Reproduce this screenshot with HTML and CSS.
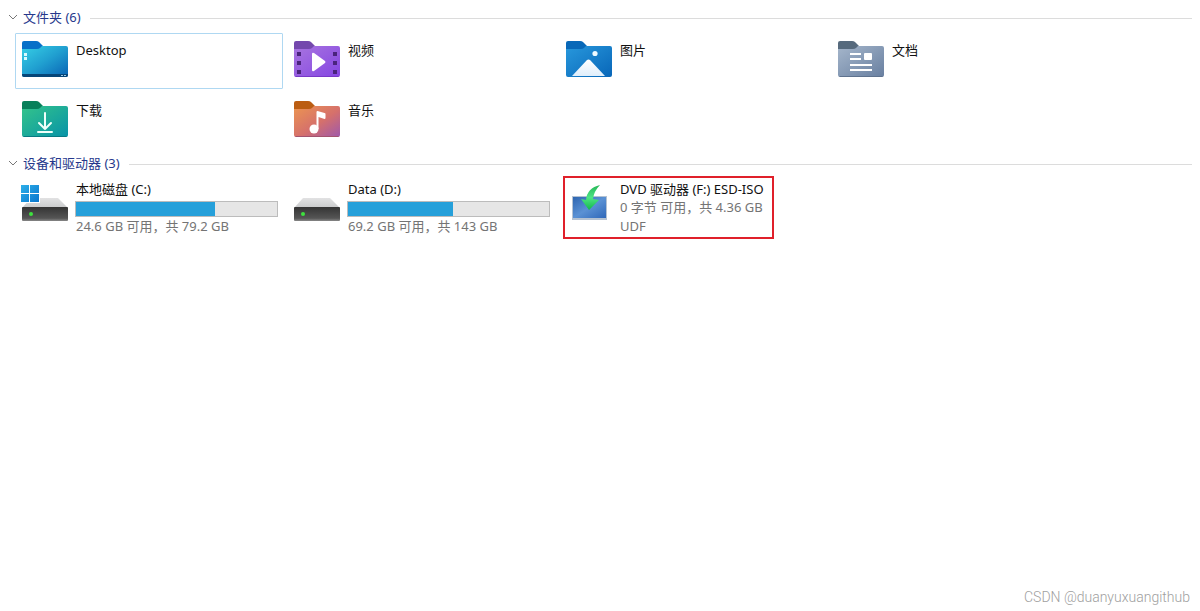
FILE: index.html
```html
<!DOCTYPE html>
<html lang="zh-CN">
<head>
    <meta charset="UTF-8">
    <meta name="viewport" content="width=device-width, initial-scale=1.0">
    <title>此电脑</title>
    <link rel="stylesheet" href="styles.css">
</head>
<body>

<main class="explorer">
    <!-- 文件夹 -->
    <section class="group">
        <h2 class="group-header">
            <button class="group-toggle" type="button">
                <svg class="chevron" viewBox="0 0 10 6"><path d="M1 1l4 4 4-4"/></svg>
                文件夹 (6)
            </button>
        </h2>
        <div class="items">
            <a class="item selected" href="#">
                <svg class="icon" viewBox="0 0 46 36">
                    <defs>
                        <linearGradient id="desktop" x1="0" y1="0" x2="1" y2="1"><stop offset="0" stop-color="#37d0e6"/><stop offset=".5" stop-color="#209fd0"/><stop offset="1" stop-color="#0862b4"/></linearGradient>
                    </defs>
                    <path fill="#0870c8" d="M0 2q0-2 2-2h12q2 0 3 1l4 4-3 5H0z"/>
                    <path fill="url(#desktop)" d="M0 8h15q2 0 3-1l2-2h24q2 0 2 2v27q0 2-2 2H2q-2 0-2-2z"/>
                    <path fill="#064678" d="M0 33h46v1q0 2-2 2H2q-2 0-2-2z"/>
                    <path fill="#d9fbff" d="M2 12h3v3H2zM2 16h3v3H2z"/>
                    <path fill="#9fcbe5" d="M39 34h2v1h-2zM42 34h2v1h-2z"/>
                </svg>
                <span class="name">Desktop</span>
            </a>
            <a class="item" href="#">
                <svg class="icon" viewBox="0 0 46 36">
                    <defs>
                        <linearGradient id="video" x1="0" y1="0" x2="1" y2="1"><stop offset="0" stop-color="#a875df"/><stop offset="1" stop-color="#8546e2"/></linearGradient>
                    </defs>
                    <path fill="#7448ad" d="M0 2q0-2 2-2h12q2 0 3 1l4 4-3 5H0z"/>
                    <path fill="url(#video)" d="M0 8h15q2 0 3-1l2-2h24q2 0 2 2v27q0 2-2 2H2q-2 0-2-2z"/>
                    <path fill="#7838c7" d="M1 35h44l-1 1H2z"/>
                    <path fill="#4a247d" d="M3 11h4v4H3zM3 20h4v4H3zM3 29h4v4H3zM39 11h4v4h-4zM39 20h4v4h-4zM39 29h4v4h-4z"/>
                    <path fill="#fff" d="M18 13q0-2 2-1l11 8q1 1 0 2l-11 8q-2 1-2-1z"/>
                </svg>
                <span class="name">视频</span>
            </a>
            <a class="item" href="#">
                <svg class="icon" viewBox="0 0 46 36">
                    <defs>
                        <linearGradient id="picture" x1="0" y1="0" x2="1" y2="1"><stop offset="0" stop-color="#2898dc"/><stop offset="1" stop-color="#0866b8"/></linearGradient>
                        <linearGradient id="hill" x1="0" y1="0" x2="0" y2="1"><stop offset="0" stop-color="#fff"/><stop offset="1" stop-color="#dfeefb"/></linearGradient>
                    </defs>
                    <path fill="#0868b8" d="M0 2q0-2 2-2h12q2 0 3 1l4 4-3 5H0z"/>
                    <path fill="url(#picture)" d="M0 8h15q2 0 3-1l2-2h24q2 0 2 2v27q0 2-2 2H2q-2 0-2-2z"/>
                    <circle cx="29" cy="12.500" r="2.600" fill="#effaff"/>
                    <path fill="url(#hill)" d="M6 35l14.500-15.500q2-2 4 0L39 35z"/>
                </svg>
                <span class="name">图片</span>
            </a>
            <a class="item" href="#">
                <svg class="icon" viewBox="0 0 46 36">
                    <defs>
                        <linearGradient id="document" x1="0" y1="0" x2="1" y2="1"><stop offset="0" stop-color="#a5b6cb"/><stop offset="1" stop-color="#687fa0"/></linearGradient>
                    </defs>
                    <path fill="#566a7d" d="M0 2q0-2 2-2h12q2 0 3 1l4 4-3 5H0z"/>
                    <path fill="url(#document)" d="M0 8h15q2 0 3-1l2-2h24q2 0 2 2v27q0 2-2 2H2q-2 0-2-2z"/>
                    <path fill="#5e728e" d="M1 35h44l-1 1H2z"/>
                    <path fill="#fff" d="M12 12h11v2H12zM12 17h11v2H12zM12 23h22v2H12zM12 28h22v2H12z"/>
                    <rect x="26" y="12" width="8" height="7" rx="1" fill="#fff"/>
                </svg>
                <span class="name">文档</span>
            </a>
            <a class="item" href="#">
                <svg class="icon" viewBox="0 0 46 36">
                    <defs>
                        <linearGradient id="download" x1="0" y1="0" x2="1" y2="1"><stop offset="0" stop-color="#34c48a"/><stop offset="1" stop-color="#0793a8"/></linearGradient>
                    </defs>
                    <path fill="#08805a" d="M0 2q0-2 2-2h12q2 0 3 1l4 4-3 5H0z"/>
                    <path fill="url(#download)" d="M0 8h15q2 0 3-1l2-2h24q2 0 2 2v27q0 2-2 2H2q-2 0-2-2z"/>
                    <path fill="#087a83" d="M1 35h44l-1 1H2z"/>
                    <path fill="none" stroke="#effffa" stroke-width="2" stroke-linecap="round" stroke-linejoin="round" d="M23 12v16M17 22l6 6 6-6M16 31h14"/>
                </svg>
                <span class="name">下载</span>
            </a>
            <a class="item" href="#">
                <svg class="icon" viewBox="0 0 46 36">
                    <defs>
                        <linearGradient id="music" x1="0" y1="0" x2="1" y2="1"><stop offset="0" stop-color="#ec9550"/><stop offset=".55" stop-color="#d5706c"/><stop offset="1" stop-color="#9e58ac"/></linearGradient>
                    </defs>
                    <path fill="#bb5d12" d="M0 2q0-2 2-2h12q2 0 3 1l4 4-3 5H0z"/>
                    <path fill="url(#music)" d="M0 8h15q2 0 3-1l2-2h24q2 0 2 2v27q0 2-2 2H2q-2 0-2-2z"/>
                    <path fill="#a2536f" d="M1 35h44l-1 1H2z"/>
                    <circle cx="20" cy="28" r="4.500" fill="#fff"/>
                    <path fill="#fff" d="M22.500 28V11q0-1 1-1l7 2q1 0 1 1v4q0 1-1 1l-6-2v12z"/>
                </svg>
                <span class="name">音乐</span>
            </a>
        </div>
    </section>

    <!-- 设备和驱动器 -->
    <section class="group">
        <h2 class="group-header">
            <button class="group-toggle" type="button">
                <svg class="chevron" viewBox="0 0 10 6"><path d="M1 1l4 4 4-4"/></svg>
                设备和驱动器 (3)
            </button>
        </h2>
        <div class="items">
            <a class="item drive" href="#">
                <svg class="icon" viewBox="0 0 46 40">
                    <defs>
                        <linearGradient id="drive-top" x1="0" y1="0" x2="0" y2="1"><stop offset="0" stop-color="#e2e2e3"/><stop offset="1" stop-color="#c9cacb"/></linearGradient>
                        <linearGradient id="drive-front" x1="0" y1="0" x2="0" y2="1"><stop offset="0" stop-color="#343434"/><stop offset=".8" stop-color="#555"/><stop offset="1" stop-color="#888"/></linearGradient>
                        <linearGradient id="windows" x1="0" y1="0" x2="1" y2="1"><stop offset="0" stop-color="#2dafe9"/><stop offset="1" stop-color="#0875cd"/></linearGradient>
                    </defs>
                    <path fill="url(#drive-top)" d="M9 14h27l10 10H0z"/>
                    <rect y="23" width="46" height="14" rx="1" fill="url(#drive-front)"/>
                    <circle cx="9" cy="30" r="2" fill="#3ee23e"/>
                    <path fill="#fff" d="M-1 0h19v19H-1z"/>
                    <path fill="url(#windows)" d="M-1 1h8v8h-8zM8 1h9v8H8zM-1 10h8v8h-8zM8 10h9v8H8z"/>
                </svg>
                <div class="details">
                    <span class="name">本地磁盘 (C:)</span>
                    <div class="bar"><div class="bar-fill" style="width: 69%"></div></div>
                    <span class="info">24.6 GB 可用，共 79.2 GB</span>
                </div>
            </a>
            <a class="item drive" href="#">
                <svg class="icon" viewBox="0 0 46 40">
                    <path fill="url(#drive-top)" d="M9 14h27l10 10H0z"/>
                    <rect y="23" width="46" height="14" rx="1" fill="url(#drive-front)"/>
                    <circle cx="9" cy="30" r="2" fill="#3ee23e"/>
                </svg>
                <div class="details">
                    <span class="name">Data (D:)</span>
                    <div class="bar"><div class="bar-fill" style="width: 52%"></div></div>
                    <span class="info">69.2 GB 可用，共 143 GB</span>
                </div>
            </a>
            <a class="item drive marked" href="#">
                <svg class="icon" viewBox="0 0 46 40">
                    <defs>
                        <linearGradient id="screen" x1="0" y1="0" x2="1" y2="1"><stop offset="0" stop-color="#2e65b0"/><stop offset=".5" stop-color="#5a91d4"/><stop offset="1" stop-color="#2f68b9"/></linearGradient>
                        <linearGradient id="arrow" x1="0" y1="0" x2="0" y2="1"><stop offset="0" stop-color="#24b655"/><stop offset=".5" stop-color="#4ee584"/><stop offset="1" stop-color="#12b84a"/></linearGradient>
                    </defs>
                    <rect x="6" y="12" width="35" height="24" fill="#b4c2d2"/>
                    <rect x="7" y="13" width="33" height="21" fill="url(#screen)"/>
                    <path fill="url(#arrow)" d="M34 1Q28 7 27 15l6 1-10 10-8-11 5 1Q21 4 34 1z"/>
                </svg>
                <div class="details">
                    <span class="name">DVD 驱动器 (F:) ESD-ISO</span>
                    <span class="info">0 字节 可用，共 4.36 GB</span>
                    <span class="info">UDF</span>
                </div>
            </a>
        </div>
    </section>
</main>

<footer class="watermark">CSDN @duanyuxuangithub</footer>

</body>
</html>
```

FILE: styles.css
```css
* {
    box-sizing: border-box;
}
body {
    margin: 0;
    min-height: 100vh;
    display: flex;
    flex-direction: column;
    background: #fff;
    color: #111;
    font-family: "Noto Sans", "Noto Sans CJK SC", sans-serif;
    font-size: 13px;
    line-height: 18px;
}
.explorer {
    flex: 1;
    padding: 7px 8px;
}

/* 分组标题 */
.group {
    margin-bottom: 4px;
}
.group-header {
    display: flex;
    align-items: center;
    gap: 9px;
    height: 22px;
    margin: 0 0 4px;
    font-size: 13px;
    font-weight: 400;
}
.group-header::after {
    content: "";
    flex: 1;
    height: 1px;
    background: #dcdcdc;
}
.group-toggle {
    display: flex;
    align-items: center;
    gap: 5px;
    padding: 0 0 2px;
    border: none;
    background: none;
    color: #26388c;
    font: inherit;
    cursor: pointer;
}
.chevron {
    width: 10px;
    height: 6px;
    fill: none;
    stroke: #777;
}

/* 项目 */
.items {
    display: grid;
    grid-template-columns: repeat(auto-fill, 268px);
    gap: 4px;
    padding-left: 7px;
}
.item {
    position: relative;
    display: flex;
    align-items: flex-start;
    gap: 8px;
    min-height: 56px;
    padding: 7px 4px 7px 6px;
    border: 1px solid transparent;
    border-radius: 1px;
    color: inherit;
    text-decoration: none;
}
.item:hover,
.item.selected {
    border-color: #afd8f2;
}
.icon {
    flex: none;
    width: 46px;
    height: 36px;
    overflow: visible;
}
.name,
.info {
    display: block;
    white-space: nowrap;
}
.info {
    color: #747474;
}

/* 驱动器 */
.drive {
    gap: 7px;
    padding-top: 0;
    padding-bottom: 0;
}
.drive .icon {
    height: 40px;
    margin-top: 4px;
}
.details {
    flex: 1;
}
.details .name,
.details .info {
    padding-left: 1px;
}
.details .info {
    line-height: 19px;
}
.bar {
    height: 16px;
    margin: 3px 0 0;
    border: 1px solid #bcbcbc;
    background: #e6e6e6;
}
.bar-fill {
    height: 100%;
    background: #26a0da;
}
/* 红色标注框 */
.marked::after {
    content: "";
    position: absolute;
    box-sizing: border-box;
    top: -4px;
    left: 3px;
    width: 211px;
    height: 63px;
    border: 2px solid #e0202a;
}

.watermark {
    padding: 0 10px 5px;
    color: #a0a0a0;
    font-family: Roboto, sans-serif;
    font-size: 14px;
    font-weight: 300;
    text-align: right;
}
```
